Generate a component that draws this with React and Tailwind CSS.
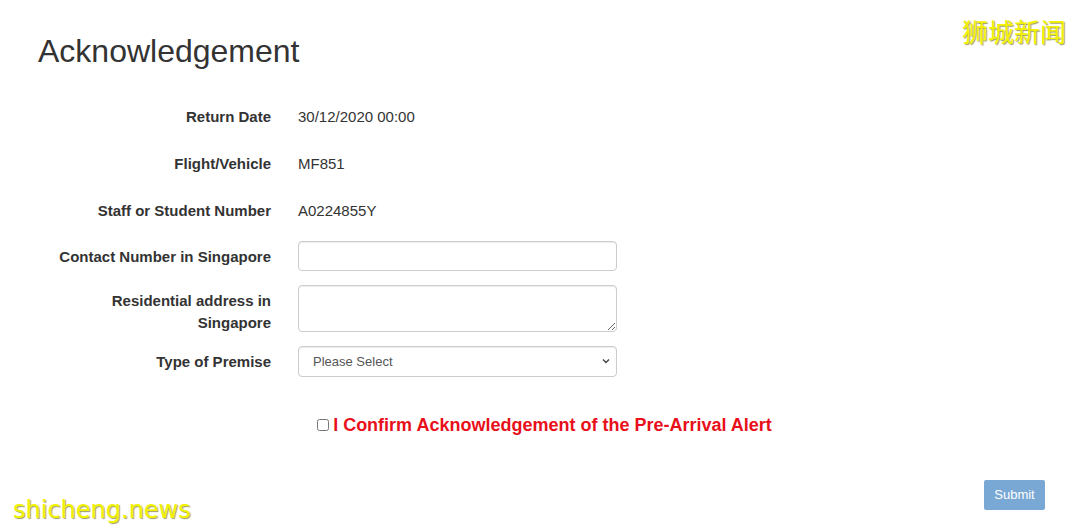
import React from "react";

const F = { fontFamily: '"Liberation Sans", Arial, sans-serif' };

function Row({ label, children, pt = "pt-[6px]", h = "" }) {
  return (
    <div className={`flex ${h}`}>
      <div className={`w-[233px] shrink-0 text-right font-bold text-[15px] leading-[22px] text-[#333] ${pt}`}>
        {label}
      </div>
      <div className="ml-[27px] w-[319px]">{children}</div>
    </div>
  );
}

export default function App() {
  return (
    <div className="relative w-[1080px] h-[531px] overflow-hidden bg-white text-[#333]" style={F}>
      <h1 className="pl-[38px] pt-[34px] text-[32px] leading-[35px] font-normal text-[#333]">
        Acknowledgement
      </h1>

      <div className="pl-[38px] mt-[31px] flex flex-col">
        <Row label="Return Date" h="h-[34px]">
          <div className="pt-[6px] text-[15px] leading-[22px]">30/12/2020 00:00</div>
        </Row>
        <div className="mt-[13px]">
          <Row label="Flight/Vehicle" h="h-[34px]">
            <div className="pt-[6px] text-[15px] leading-[22px]">MF851</div>
          </Row>
        </div>
        <div className="mt-[13px]">
          <Row label="Staff or Student Number" h="h-[34px]">
            <div className="pt-[6px] text-[15px] leading-[22px]">A0224855Y</div>
          </Row>
        </div>
        <div className="mt-[13px]">
          <Row label="Contact Number in Singapore" pt="pt-[5px]" h="h-[30px]">
            <input
              type="text"
              className="block w-[319px] h-[30px] rounded-[4px] border border-[#ccc] bg-white px-3 text-[14px] shadow-[inset_0_1px_1px_rgba(0,0,0,0.075)] outline-none"
            />
          </Row>
        </div>
        <div className="mt-[14px]">
          <Row
            label={
              <>
                Residential address in
                <br />
                Singapore
              </>
            }
            pt="pt-[5px]"
            h="h-[47px]"
          >
            <textarea className="block w-[319px] h-[47px] rounded-[4px] border border-[#ccc] bg-white px-3 text-[14px] shadow-[inset_0_1px_1px_rgba(0,0,0,0.075)] outline-none" />
          </Row>
        </div>
        <div className="mt-[14px]">
          <Row label="Type of Premise" pt="pt-[5px]" h="h-[31px]">
            <div className="relative w-[319px] h-[31px]">
              <select className="appearance-none block w-full h-full rounded-[4px] border border-[#ccc] bg-white pl-[14px] text-[13px] text-[#555] shadow-[inset_0_1px_1px_rgba(0,0,0,0.075)] outline-none">
                <option>Please Select</option>
              </select>
              <svg
                className="pointer-events-none absolute right-[7px] top-[12px]"
                width="8"
                height="6"
                viewBox="0 0 8 6"
              >
                <path d="M1 1.5 L4 4.5 L7 1.5" fill="none" stroke="#444" strokeWidth="1.4" />
              </svg>
            </div>
          </Row>
        </div>
      </div>

      <div className="mt-[36px] flex justify-center pl-[9px]">
        <label className="flex items-center gap-[4px]">
          <input type="checkbox" className="w-[12px] h-[12px] m-0 accent-[#666]" />
          <span className="text-[18px] leading-[24px] font-bold text-[#e8101a]">
            I Confirm Acknowledgement of the Pre-Arrival Alert
          </span>
        </label>
      </div>

      <div className="mt-[43px] flex justify-end pr-[35px]">
        <button className="w-[61px] h-[30px] rounded-[2px] bg-[#7aa8d5] text-white text-[13px] leading-[30px]">
          Submit
        </button>
      </div>

      <div
        className="absolute right-[14px] top-[14px] text-[26px] leading-[34px] text-[#f2f200] [text-shadow:1px_1px_1px_rgba(90,90,0,0.6)]"
        style={{ fontFamily: '"Noto Sans CJK SC", sans-serif' }}
      >
        狮城新闻
      </div>
      <div
        className="absolute left-[13px] top-[494px] text-[24px] leading-[32px] text-[#f2f200] [text-shadow:1px_1px_1px_rgba(90,90,0,0.6)]"
        style={{ fontFamily: '"DejaVu Sans", sans-serif' }}
      >
        shicheng.news
      </div>
    </div>
  );
}
